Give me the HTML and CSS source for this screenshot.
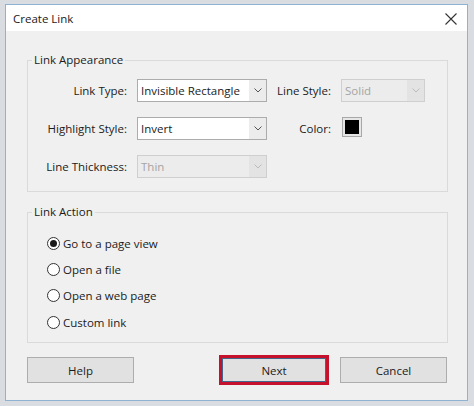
FILE: index.html
```html
<!DOCTYPE html>
<html>
<head>
<meta charset="utf-8">
<link rel="stylesheet" href="styles.css">
</head>
<body>
<div class="dialog">
  <div class="titlebar">
    <span class="title">Create Link</span>
    <svg class="close" width="12" height="12" viewBox="0 0 12 12"><path d="M0.5 0.5 L11.5 11.5 M11.5 0.5 L0.5 11.5" stroke="#333" stroke-width="1.1" fill="none"/></svg>
  </div>
  <div class="body">
    <fieldset class="group">
      <legend>Link Appearance</legend>
      <div class="grid">
        <label class="lbl">Link Type:</label>
        <div class="select"><span class="val">Invisible Rectangle</span><span class="arrow"><svg width="8" height="5" viewBox="0 0 8 5"><path d="M0.5 0.5 L4 4 L7.5 0.5" stroke="#555" fill="none"/></svg></span></div>
        <label class="lbl">Line Style:</label>
        <div class="select disabled"><span class="val">Solid</span><span class="arrow"><svg width="8" height="5" viewBox="0 0 8 5"><path d="M0.5 0.5 L4 4 L7.5 0.5" stroke="#bbb" fill="none"/></svg></span></div>

        <label class="lbl">Highlight Style:</label>
        <div class="select"><span class="val">Invert</span><span class="arrow"><svg width="8" height="5" viewBox="0 0 8 5"><path d="M0.5 0.5 L4 4 L7.5 0.5" stroke="#555" fill="none"/></svg></span></div>
        <label class="lbl">Color:</label>
        <div class="swatchcell"><span class="swatch"><span class="swatch-in"></span></span></div>

        <label class="lbl">Line Thickness:</label>
        <div class="select disabled"><span class="val">Thin</span><span class="arrow"><svg width="8" height="5" viewBox="0 0 8 5"><path d="M0.5 0.5 L4 4 L7.5 0.5" stroke="#bbb" fill="none"/></svg></span></div>
      </div>
    </fieldset>

    <fieldset class="group group2">
      <legend>Link Action</legend>
      <div class="radios">
        <div class="radio"><span class="dot checked"></span><span>Go to a page view</span></div>
        <div class="radio"><span class="dot"></span><span>Open a file</span></div>
        <div class="radio"><span class="dot"></span><span>Open a web page</span></div>
        <div class="radio"><span class="dot"></span><span>Custom link</span></div>
      </div>
    </fieldset>

    <div class="buttons">
      <button class="btn">Help</button>
      <button class="btn next">Next</button>
      <button class="btn cancel">Cancel</button>
    </div>
  </div>
</div>
</body>
</html>
```

FILE: styles.css
```css
* { box-sizing: border-box; }
html, body { margin: 0; padding: 0; }
body {
  background: #d9dce0;
  width: 474px;
  height: 406px;
  overflow: hidden;
  font-family: "Open Sans", "Noto Sans", sans-serif;
  font-size: 11.5px;
  color: #1b1b1b;
  padding: 4px 0 0 5px;
}
.dialog {
  width: 463px;
  height: 397px;
  border: 1px solid #8fb1d2;
  background: #f0f0f0;
  display: flex;
  flex-direction: column;
}
.titlebar {
  height: 26px;
  background: #ffffff;
  display: flex;
  align-items: center;
  justify-content: space-between;
  padding: 0 10px 0 7px;
}
.title {
  font-size: 11.5px;
  color: #1a1a1a;
}
.close { display: block; margin-top: 1px; }
.body {
  padding: 21px 19px 0 21px;
  display: flex;
  flex-direction: column;
}
.group {
  margin: 0;
  padding: 11px 0 13px 0;
  border: 1px solid #dadada;
  min-width: 0;
}
.group legend {
  margin-left: 4px;
  padding: 0 2px;
  line-height: 16px;
  height: 16px;
  font-size: 11.5px;
}
.group2 {
  margin-top: 12px;
  padding: 10px 0 7px 0;
}
.grid {
  display: grid;
  grid-template-columns: 99px 130px 54px 84px;
  column-gap: 10px;
  row-gap: 15px;
  grid-auto-rows: 23px;
}
.lbl {
  text-align: right;
  white-space: nowrap;
  line-height: 23px;
}
.select {
  display: flex;
  height: 23px;
  border: 1px solid #acacac;
  background: #ffffff;
}
.select .val {
  flex: 1;
  padding-left: 3px;
  line-height: 21px;
  white-space: nowrap;
  overflow: hidden;
}
.select .arrow {
  width: 17px;
  background: #ececec;
  display: flex;
  align-items: center;
  justify-content: center;
}
.select.disabled {
  border-color: #cfcfcf;
  background: #ececec;
  color: #a4a4a4;
}
.select.disabled .arrow { background: #e3e3e3; }
.swatchcell { display: flex; align-items: flex-start; padding-left: 1px; }
.swatch {
  width: 20px;
  height: 20px;
  border: 1px solid #a8a8a8;
  background: #e6e6e6;
  padding: 2px;
  display: block;
}
.swatch-in {
  display: block;
  width: 14px;
  height: 14px;
  background: #000;
}
.radios { display: flex; flex-direction: column; padding-left: 19px; }
.radio {
  height: 26.3px;
  display: flex;
  align-items: center;
  gap: 3px;
}
.dot {
  width: 13px;
  height: 13px;
  border-radius: 50%;
  border: 1px solid #333;
  background: #fff;
  display: flex;
  align-items: center;
  justify-content: center;
}
.dot.checked::after {
  content: "";
  width: 7px;
  height: 7px;
  border-radius: 50%;
  background: #1a1a1a;
}
.buttons {
  display: flex;
  margin-top: 14px;
  padding-right: 1px;
}
.btn {
  font-family: "Open Sans", "Noto Sans", sans-serif;
  font-size: 11.5px;
  color: #1b1b1b;
  width: 107px;
  height: 26px;
  background: #e1e1e1;
  border: 1px solid #adadad;
  padding: 0;
}
.next {
  margin-left: auto;
  width: 104px;
  height: 24px;
  margin-top: 1px;
  border: 1px solid #44648a;
  outline: 3px solid #c5112c;
}
.cancel { margin-left: 14px; }
```
